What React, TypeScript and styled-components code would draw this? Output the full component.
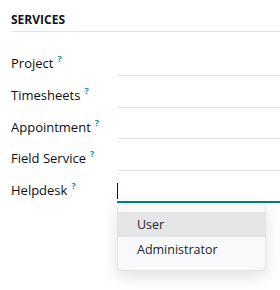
import { createGlobalStyle, styled } from "styled-components";

const GlobalStyle = createGlobalStyle`
  html, body {
    margin: 0;
    min-height: 100vh;
  }
  body {
    background: #fff;
    font-family: "Open Sans", "Noto Sans", sans-serif;
    color: #212529;
  }
  #root {
    min-height: 100vh;
  }
`;

const Section = styled.div`
  padding: 12px 0 0 11px;
`;

const SectionTitle = styled.h2`
  margin: 0;
  font-size: 12px;
  font-weight: 700;
  line-height: 16px;
  text-transform: uppercase;
  color: #111418;
  padding-bottom: 3px;
  border-bottom: 1px solid #e2e3e5;
`;

const Rows = styled.div`
  margin-top: 12px;
  display: flex;
  flex-direction: column;
`;

const Row = styled.div`
  display: grid;
  grid-template-columns: 106px 1fr;
  height: 31.75px;
`;

const Label = styled.label`
  font-size: 13px;
  font-weight: 500;
  line-height: 20px;
  padding-top: 9px;
  color: #0d1014;
  white-space: nowrap;
`;

const Help = styled.sup`
  color: #0f8fa8;
  font-size: 9px;
  font-weight: 700;
  margin-left: 4px;
  vertical-align: 6px;
  line-height: 0;
`;

const Field = styled.div<{ $focused?: boolean }>`
  position: relative;
  border-bottom: ${(p) => (p.$focused ? "2px solid #017e84" : "1px solid #e2e3e5")};
`;

const Cursor = styled.span`
  display: block;
  width: 1px;
  height: 16px;
  margin-top: 12px;
  background: #111;
`;

const Menu = styled.div`
  position: absolute;
  z-index: 5;
  top: calc(100% + 2px);
  left: 0;
  width: 149px;
  padding: 8px 0;
  background: #f8f9fa;
  border: 1px solid #e3e4e6;
  border-radius: 4px;
  box-shadow: 0 6px 16px rgba(0, 0, 0, 0.12);
  box-sizing: border-box;
`;

const MenuItem = styled.div<{ $active?: boolean }>`
  height: 25px;
  line-height: 25px;
  padding: 0 19px;
  font-size: 12.5px;
  color: #212529;
  background: ${(p) => (p.$active ? "#e4e5e7" : "transparent")};
`;

const fields = ["Project", "Timesheets", "Appointment", "Field Service"];

export default function App() {
  return (
    <>
      <GlobalStyle />
      <Section>
        <SectionTitle>Services</SectionTitle>
        <Rows>
          {fields.map((name) => (
            <Row key={name}>
              <Label>
                {name}
                <Help>?</Help>
              </Label>
              <Field />
            </Row>
          ))}
          <Row>
            <Label>
              Helpdesk
              <Help>?</Help>
            </Label>
            <Field $focused>
              <Cursor />
              <Menu>
                <MenuItem $active>User</MenuItem>
                <MenuItem>Administrator</MenuItem>
              </Menu>
            </Field>
          </Row>
        </Rows>
      </Section>
    </>
  );
}
